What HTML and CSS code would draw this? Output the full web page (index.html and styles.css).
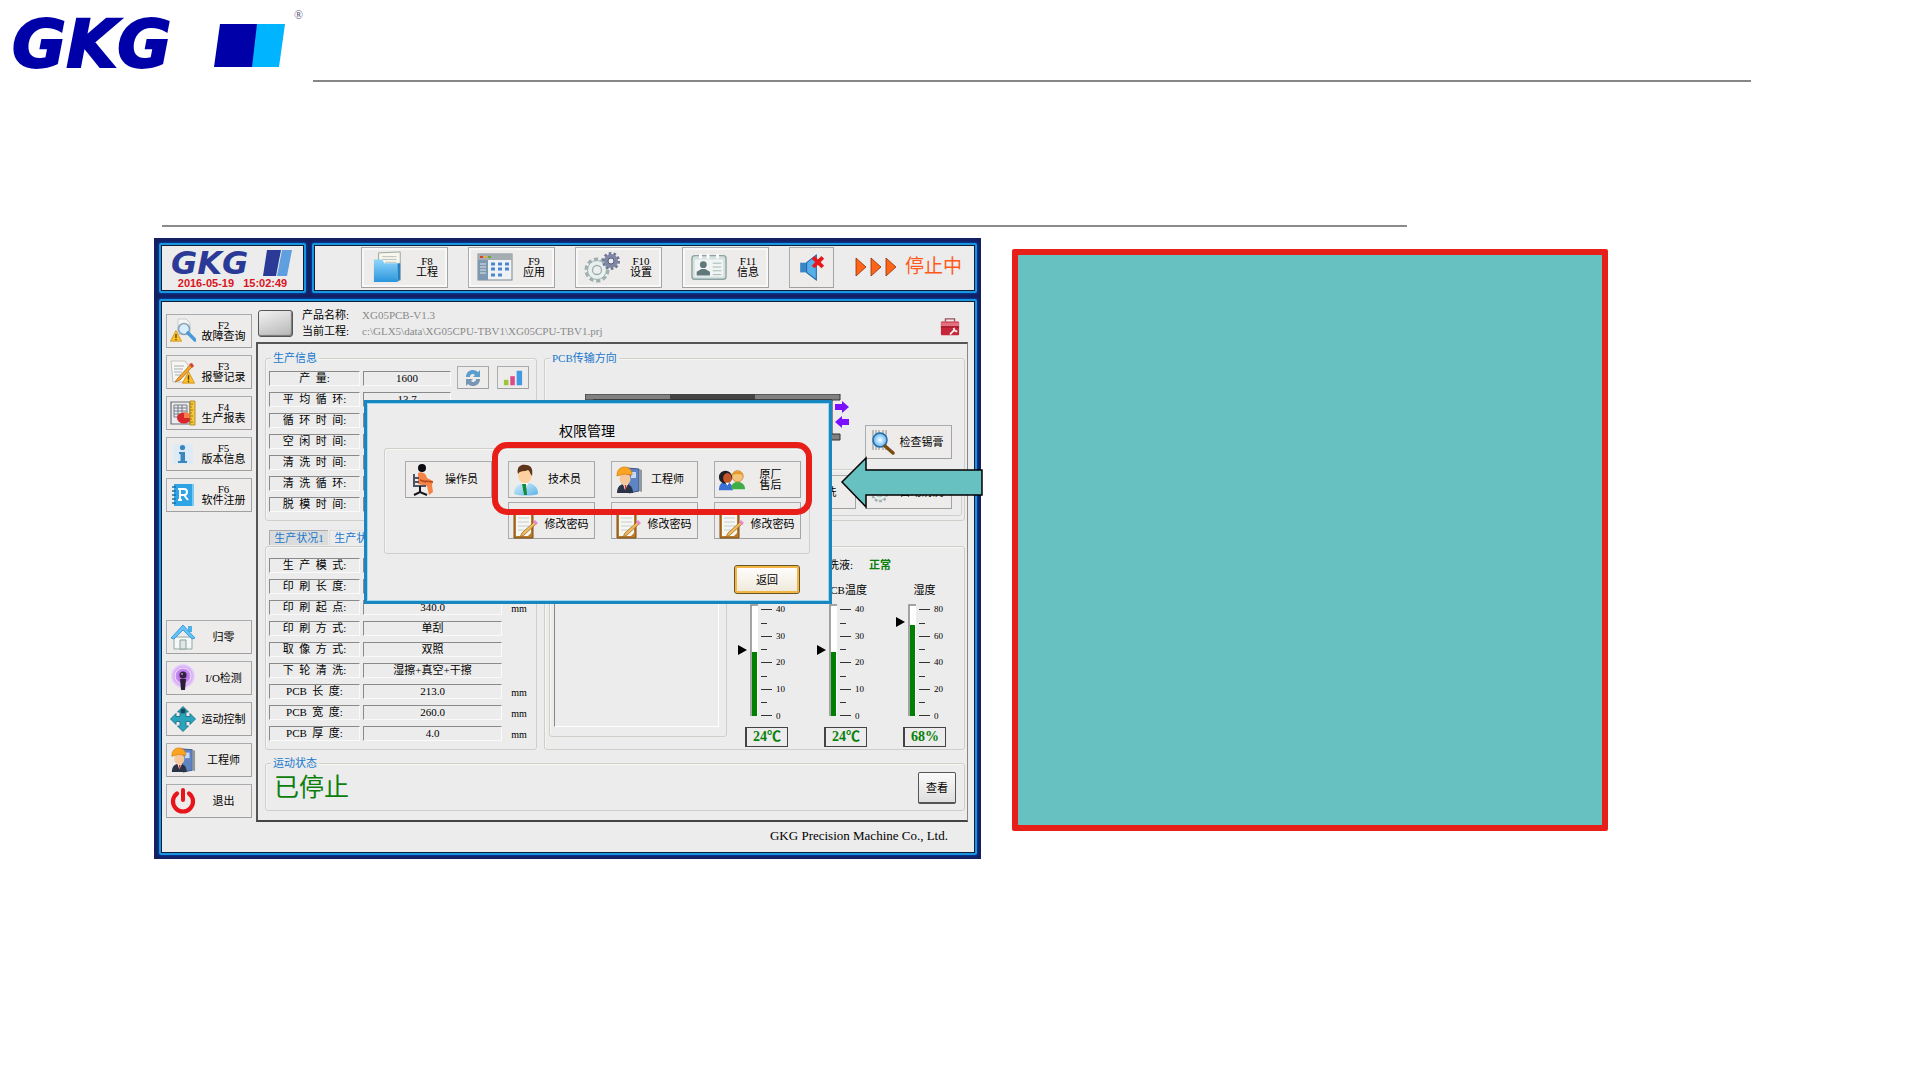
FILE: index.html
```html
<!DOCTYPE html>
<html lang="zh-CN">
<head>
<meta charset="utf-8">
<title>GKG 权限管理</title>
<link rel="stylesheet" href="styles.css">
</head>
<body>
<svg class="defs" aria-hidden="true">
  <defs>
    <linearGradient id="gBlue" x1="0" y1="0" x2="0" y2="1"><stop offset="0" stop-color="#8fd6fa"/><stop offset="1" stop-color="#2a95dd"/></linearGradient>
    <linearGradient id="gSuit" x1="0" y1="0" x2="1" y2="1"><stop offset="0" stop-color="#d9f1fc"/><stop offset="1" stop-color="#5ab4e8"/></linearGradient>
    <radialGradient id="gLens"><stop offset="0" stop-color="#fff"/><stop offset="1" stop-color="#58b4f5"/></radialGradient>
    <radialGradient id="gWave"><stop offset="0" stop-color="#a34fe0"/><stop offset=".55" stop-color="#c58bf0"/><stop offset="1" stop-color="#ecd9fb"/></radialGradient>
  </defs>
  <symbol id="warn" viewBox="0 0 12 12"><path d="M6 .5 11.6 11.2H.4Z" fill="#fbc02a" stroke="#c98a10" stroke-width=".7"/><path d="M6 4v4M6 9v1.3" stroke="#5a3b00" stroke-width="1.3"/></symbol>
  <symbol id="i-fault" viewBox="0 0 26 26"><path d="M8 1h8l4 4v11H8Z" fill="#f4f6f6" stroke="#c3cccc"/><circle cx="14" cy="11" r="5.5" fill="#d9eefc" stroke="#8aa3b5" stroke-width="1.6"/><path d="m18 15 7 7" stroke="#4a9bd8" stroke-width="3.6" stroke-linecap="round"/><use href="#warn" x="0" y="12" width="12" height="12"/></symbol>
  <symbol id="i-alarm" viewBox="0 0 26 26"><path d="M1 2h14l3 4v17H3Z" fill="#f6f6f3" stroke="#c4c4bd"/><path d="M4 7h10M4 10h9M4 13h8M5 16h6" stroke="#aab0b4"/><path d="M21 5 8 19l-3 4 5-2L23 7Z" fill="#f7a726" stroke="#b06a16" stroke-width=".8"/><path d="m19 5 3-1 2 3-2 2Z" fill="#d9432f"/><use href="#warn" x="12" y="12" width="13" height="13"/></symbol>
  <symbol id="i-report" viewBox="0 0 26 26"><path d="M1 2h19v22H1Z" fill="#e9ebee" stroke="#6c6f75" stroke-width="1.2"/><path d="M4 5h13v12H4ZM4 8h13M4 11h13M4 14h13M8 5v12M12 5v12" fill="none" stroke="#777b86"/><ellipse cx="14" cy="18" rx="7" ry="5.5" fill="#d8262b"/><path d="M14 18V12a7 5.5 0 0 1 7 6Z" fill="#ff7c4b"/><path d="M20 1h5v24h-5Z" fill="#f3c83a" stroke="#a98114" stroke-width=".8"/><path d="M20 4h3M20 7h2M20 10h3M20 13h2M20 16h3M20 19h2M20 22h3" stroke="#8a6a10" stroke-width=".8"/></symbol>
  <symbol id="i-info" viewBox="0 0 26 26"><rect x="3" y="3" width="20" height="20" rx="2" fill="#dcebf5"/><circle cx="12.500" cy="6.500" r="2.600" fill="#3b86bd"/><path d="M9 11h6v9h2v2H8v-2h2.500v-7H9Z" fill="#3b86bd"/></symbol>
  <symbol id="i-reg" viewBox="0 0 26 26"><rect x="4" y="2" width="20" height="22" fill="#2ea3e6"/><path d="M2 5h4M2 9h4M2 13h4M2 17h4M2 21h4" stroke="#1b6fa6" stroke-width="1.5"/><path d="M22 2h2v22h-2Z" fill="#7cc9f4"/><path d="M10 18V7h4a3 3 0 0 1 0 6h-4m4 0 4 5M8 7h3M8 18h4" fill="none" stroke="#fff" stroke-width="2"/></symbol>
  <symbol id="i-home" viewBox="0 0 26 26"><path d="M4 13h18v12H4Z" fill="#f4f8f6" stroke="#8fa9a4"/><path d="M10 16h6v9h-6Z" fill="#dfe8e6" stroke="#8c9f9b"/><path d="M18 2h4v6h-4Z" fill="#4fb1ea"/><path d="M1 14 13 1l12 13-3 1-9-9-9 9Z" fill="#64c2f6" stroke="#2a8fd3" stroke-width=".8"/></symbol>
  <symbol id="i-io" viewBox="0 0 26 26"><circle cx="13" cy="11" r="12" fill="url(#gWave)"/><circle cx="13" cy="11" r="8" fill="none" stroke="#f2e2ff" stroke-width="1"/><circle cx="13" cy="10" r="3.500" fill="#33213f"/><path d="M10 14h6l-1 11h-4Z" fill="#2a1e36"/><circle cx="12" cy="9" r="1" fill="#b28fd0"/></symbol>
  <symbol id="i-move" viewBox="0 0 26 26"><path d="M13 .5l5.500 5.500H16v4.500h4V7.500l5.500 5.500-5.500 5.500v-3h-4V20h2.500L13 25.500 7.500 20H10v-4.500H6v3L.5 13 6 7.500v3h4V6H7.500Z" fill="#2aa3bd" stroke="#1c7289" stroke-width=".9"/><circle cx="13" cy="5" r="2.500" fill="#154a5c"/></symbol>
  <symbol id="i-eng" viewBox="0 0 28 28"><path d="m12 2 12 1v22l-10 2Z" fill="#5f84c4" stroke="#3a5488"/><path d="m24 3 3 1v22l-3-1Z" fill="#90999f"/><path d="M16 6h5v6h-5Z" fill="#c5d8f4"/><path d="M2 27c0-6 3-9 8-9s8 3 8 9Z" fill="#2a3446"/><path d="m8 18 2 6 3-6Z" fill="#fff"/><path d="m9.500 19 1 6 1-6Z" fill="#d22"/><ellipse cx="10" cy="13" rx="5.500" ry="6" fill="#f6c79b"/><path d="M2 10C2 4 5 1 9.500 1S17 4 17 9l-8-1Z" fill="#fba41f" stroke="#d27a0b" stroke-width=".7"/></symbol>
  <symbol id="i-power" viewBox="0 0 26 26"><path d="M7 5.500a10 10 0 1 0 12 0" fill="none" stroke="#e8141c" stroke-width="4.200" stroke-linecap="round"/><path d="M13 2v10" stroke="#e8141c" stroke-width="4" stroke-linecap="round"/></symbol>
  <symbol id="i-folder" viewBox="0 0 32 34"><path d="M6 2 29 1v30H6Z" fill="#f7f7ee" stroke="#94a39a"/><path d="M10 6h15M10 9h15M13 12h12" stroke="#b6beb8"/><path d="M1 9h9l2 4h14v20H1Z" fill="url(#gBlue)"/><path d="M26 13h3v17l-3 3Z" fill="#2381c2"/></symbol>
  <symbol id="i-app" viewBox="0 0 36 28"><rect x="1" y="1" width="34" height="26" fill="#eef2f4" stroke="#7e868c"/><path d="M1 1h34v6H1Z" fill="#a5adb2"/><path d="M3 4h3" stroke="#d8412d" stroke-width="2"/><path d="M7 4h3" stroke="#e8b12c" stroke-width="2"/><path d="M11 4h3" stroke="#5fae3a" stroke-width="2"/><path d="M1 7h10v20H1Z" fill="#7d98b0"/><path d="M3 11h6M3 14h6M3 17h6M3 20h6" stroke="#dce7f0"/><path d="M14 11h4M21 11h4M28 11h4M14 16h4M21 16h4M28 16h4M14 22h4M21 22h4" stroke="#4b87cf" stroke-width="3"/></symbol>
  <symbol id="i-gears" viewBox="0 0 36 32"><circle cx="13" cy="19" r="10.500" fill="none" stroke="#9dafb0" stroke-width="4" stroke-dasharray="4 2.600"/><circle cx="13" cy="19" r="9.500" fill="#e8f0ee" stroke="#9dafb0"/><circle cx="13" cy="19" r="4.500" fill="#eee" stroke="#9dafb0" stroke-width="1.300"/><circle cx="27" cy="10" r="7.500" fill="none" stroke="#6e7596" stroke-width="3" stroke-dasharray="2.500 2.200"/><circle cx="27" cy="10" r="7" fill="#8087a5"/><circle cx="27" cy="10" r="3" fill="#eee" stroke="#555c7e"/></symbol>
  <symbol id="i-card" viewBox="0 0 38 28"><rect x="1" y="2" width="36" height="25" rx="3" fill="#d5e0e0" stroke="#8ea3a3" stroke-width="1.500"/><rect x="4" y="6" width="30" height="18" fill="#f0f5f4"/><path d="M10 0v5M18 0v5M28 0v5" stroke="#fff" stroke-width="3"/><circle cx="13" cy="11.500" r="3.600" fill="#60777c"/><path d="M6 23v-4l5-3h4l5 3v4Z" fill="#60777c"/><path d="M23 10h9M23 14h9M23 18h9M23 22h9" stroke="#a4b3b3"/></symbol>
  <symbol id="i-mute" viewBox="0 0 24 26"><path d="M1 9h6v9H1Z" fill="#3a86c6"/><path d="m7 9 9-7v23l-9-7Z" fill="#58b0ea" stroke="#1f66a6"/><path d="m13 4 9 9M22 4l-9 9" stroke="#e8161a" stroke-width="3.600"/></symbol>
  <symbol id="i-box" viewBox="0 0 22 20"><path d="M6 4V1h10v3" fill="none" stroke="#97505a" stroke-width="1.500"/><rect x="1" y="4" width="20" height="15" rx="1" fill="#c8273b"/><path d="M1 5h20v4H1Z" fill="#e1727f"/><path d="M1 10h20" stroke="#8c1626"/><path d="m11 18 5-5m-1-2 1 3 3 1" fill="none" stroke="#f3f3f3" stroke-width="2"/></symbol>
  <symbol id="i-refresh" viewBox="0 0 18 18"><path d="M2 8C2 1 10-1 14 3l2-2v7H9l2-2C9 4 6 5 6 8Z" fill="#5b9dcc"/><path d="M16 10c0 7-8 9-12 5l-2 2v-7h7l-2 2c2 2 5 1 5-2Z" fill="#7795b5"/></symbol>
  <symbol id="i-bars" viewBox="0 0 22 18"><path d="M1 11h5v6H1Z" fill="#9dc53b"/><path d="M8 7h5v10H8Z" fill="#dc4b86"/><path d="M15 1h6v16h-6Z" fill="#3f9be4"/></symbol>
  <symbol id="i-oper" viewBox="0 0 24 32"><circle cx="11" cy="4" r="4" fill="#0b0b12"/><path d="M7 9c4-2 8 0 9 5l6 3-1 4 1 7-4 3-2-9-9-2Z" fill="#f58345"/><path d="M3 10v12h12M3 14h5M3 18h5" fill="none" stroke="#4c5362" stroke-width="2"/><path d="m14 17 8 1M9 16l6 2" stroke="#b14a20" stroke-width="1.500"/><path d="M9 22v6m-6 3 6-3 7 3" fill="none" stroke="#15151c" stroke-width="2"/></symbol>
  <symbol id="i-tech" viewBox="0 0 26 32"><path d="M1 30c0-7 4-11 12-11s12 4 12 11c-6 2-18 2-24 0Z" fill="url(#gSuit)"/><path d="m9 19 2 12 4-12Z" fill="#fff"/><path d="m9 20 2 11h3l-1-11Z" fill="#128a3c"/><ellipse cx="12" cy="11" rx="7" ry="8.500" fill="#fcd0a0"/><path d="M5 10C3 2 9 0 13 1c6 0 7 5 6 11-2-2-2-5-4-6-3 2-8 0-10 4Z" fill="#5d351b"/></symbol>
  <symbol id="i-team" viewBox="0 0 30 24"><path d="M1 23c0-6 3-9 7-9s8 3 8 9Z" fill="#3a6fd8"/><path d="M14 22c0-5 3-8 7-8s8 3 8 8Z" fill="#3fae48"/><circle cx="21" cy="8" r="6" fill="#f5c27c" stroke="#c98a31"/><path d="M15 7c1-6 11-6 12 0-4-2-8-2-12 0Z" fill="#e39a27"/><circle cx="8" cy="9" r="7" fill="#1f2125"/><ellipse cx="10" cy="10" rx="4.500" ry="5.500" fill="#c4562a"/><path d="m8 15 2 3 2-3Z" fill="#fff"/></symbol>
  <symbol id="i-note" viewBox="0 0 26 30"><path d="M2 2h19v27H2Z" fill="#b97a2d" stroke="#7d4c14"/><path d="M4 3h15v21l-3 3H4Z" fill="#f7f7f1"/><path d="M6 9h11M6 13h11M6 17h11M6 21h8" stroke="#c6ccd2"/><path d="M8 1h7v4H8Z" fill="#c2c2c2"/><path d="m22 13 2 2-12 11-4 2 2-4Z" fill="#f4bc5e" stroke="#9a6a22" stroke-width=".8"/><path d="m21 13 2-2 3 3-2 2Z" fill="#e58ad0"/></symbol>
  <symbol id="i-search" viewBox="0 0 24 26"><path d="M2 1v20M5 1v20M8 1v20M12 1v20M15 1v20" stroke="#8a8a8a"/><circle cx="9" cy="11" r="7" fill="url(#gLens)" stroke="#2369a8" stroke-width="1.500"/><path d="m14 17 8 7" stroke="#7a4c14" stroke-width="3.500" stroke-linecap="round"/></symbol>
</svg>

<header class="brand">
  <div class="logo"><span class="wordmark">GKG</span>
    <svg class="flag" viewBox="0 0 71 43" aria-hidden="true"><path d="M6 0h38l-5 43H0Z" fill="#0000a8"/><path d="M43 0h28l-6 43H38Z" fill="#00b4ff"/></svg>
    <span class="reg">®</span></div>
  <hr class="rule">
</header>

<main>
  <hr class="subrule">
  <div class="stage">
    <section class="hmi">
      <div class="topbar">
        <div class="box clock">
          <div class="minilogo"><span>GKG</span><svg viewBox="0 0 29 26" aria-hidden="true"><path d="M4 0h14l-5 26H0Z" fill="#2b3a96"/><path d="M19 0h10l-5 26H14Z" fill="#5f9fe0"/></svg></div>
          <time datetime="2016-05-19T15:02:49">2016-05-19&nbsp;&nbsp; 15:02:49</time>
        </div>
        <nav class="box menu">
          <button class="btn top"><svg class="ic32"><use href="#i-folder"/></svg><span>F8<br>工程</span></button>
          <button class="btn top"><svg class="ic36"><use href="#i-app"/></svg><span>F9<br>应用</span></button>
          <button class="btn top"><svg class="ic36"><use href="#i-gears"/></svg><span>F10<br>设置</span></button>
          <button class="btn top"><svg class="ic36"><use href="#i-card"/></svg><span>F11<br>信息</span></button>
          <button class="btn mute" aria-label="静音"><svg class="ic26"><use href="#i-mute"/></svg></button>
          <div class="state"><svg viewBox="0 0 42 20" aria-hidden="true"><path d="m1 1 10 9-10 9ZM16 1l10 9-10 9ZM31 1l10 9-10 9Z" fill="#ff6418" stroke="#8a3208" stroke-width=".8"/></svg>停止中</div>
        </nav>
      </div>

      <div class="box body">
        <nav class="side">
          <button class="btn nav"><svg class="ic26"><use href="#i-fault"/></svg><span>F2<br>故障查询</span></button>
          <button class="btn nav"><svg class="ic26"><use href="#i-alarm"/></svg><span>F3<br>报警记录</span></button>
          <button class="btn nav"><svg class="ic26"><use href="#i-report"/></svg><span>F4<br>生产报表</span></button>
          <button class="btn nav"><svg class="ic26"><use href="#i-info"/></svg><span>F5<br>版本信息</span></button>
          <button class="btn nav"><svg class="ic26"><use href="#i-reg"/></svg><span>F6<br>软件注册</span></button>
          <button class="btn nav second"><svg class="ic26"><use href="#i-home"/></svg><span>归零</span></button>
          <button class="btn nav"><svg class="ic26"><use href="#i-io"/></svg><span>I/O检测</span></button>
          <button class="btn nav"><svg class="ic26"><use href="#i-move"/></svg><span>运动控制</span></button>
          <button class="btn nav"><svg class="ic26"><use href="#i-eng"/></svg><span>工程师</span></button>
          <button class="btn nav"><svg class="ic26"><use href="#i-power"/></svg><span>退出</span></button>
        </nav>

        <div class="content">
          <div class="project">
            <button class="lamp" aria-label="产品"></button>
            <dl>
              <dt>产品名称:</dt><dd>XG05PCB-V1.3</dd>
              <dt>当前工程:</dt><dd>c:\GLX5\data\XG05CPU-TBV1\XG05CPU-TBV1.prj</dd>
            </dl>
            <svg class="toolbox" aria-hidden="true"><use href="#i-box"/></svg>
          </div>

          <div class="work">
            <div class="left">
              <section class="group upper">
                <h2>生产信息</h2>
                <div class="info">
                  <dl class="rows short">
                    <dt>产  量:</dt><dd>1600</dd>
                    <dt>平  均  循  环:</dt><dd>13.7</dd>
                    <dt>循  环  时  间:</dt><dd></dd>
                    <dt>空  闲  时  间:</dt><dd></dd>
                    <dt>清  洗  时  间:</dt><dd></dd>
                    <dt>清  洗  循  环:</dt><dd></dd>
                    <dt>脱  模  时  间:</dt><dd></dd>
                  </dl>
                  <div class="aside">
                    <div class="tools">
                      <button class="btn tool" aria-label="刷新"><svg><use href="#i-refresh"/></svg></button>
                      <button class="btn tool" aria-label="图表"><svg><use href="#i-bars"/></svg></button>
                    </div>
                    <span class="unit">s</span>
                  </div>
                </div>
              </section>
              <div class="tabs"><button class="tab">生产状况1</button><button class="tab on">生产状况2</button></div>
              <section class="group lower">
                <dl class="rows long">
                  <dt>生  产  模  式:</dt><dd></dd><dd class="u"></dd>
                  <dt>印  刷  长  度:</dt><dd></dd><dd class="u"></dd>
                  <dt>印  刷  起  点:</dt><dd>340.0</dd><dd class="u">mm</dd>
                  <dt>印  刷  方  式:</dt><dd>单刮</dd><dd class="u"></dd>
                  <dt>取  像  方  式:</dt><dd>双照</dd><dd class="u"></dd>
                  <dt>下  轮  清  洗:</dt><dd>湿擦+真空+干擦</dd><dd class="u"></dd>
                  <dt>PCB  长  度:</dt><dd>213.0</dd><dd class="u">mm</dd>
                  <dt>PCB  宽  度:</dt><dd>260.0</dd><dd class="u">mm</dd>
                  <dt>PCB  厚  度:</dt><dd>4.0</dd><dd class="u">mm</dd>
                </dl>
              </section>
            </div>

            <div class="right">
              <section class="group upper">
                <h2>PCB传输方向</h2>
                <div class="transfer">
                  <svg class="conveyor" viewBox="0 0 265 48" aria-hidden="true"><path d="M0 0h255v6H0ZM0 40h255v6H0Z" fill="#808080" stroke="#333"/><path d="M85 0h85v6H85Z" fill="#444"/><path d="M8 6h239v34H8Z" fill="#eee" stroke="#222"/><path d="M250 10h7V7l7 6-7 6v-3h-7ZM264 31h-7v3l-7-6 7-6v3h7Z" fill="#7a10ff"/></svg>
                  <button class="btn act"><svg class="ic24"><use href="#i-search"/></svg><span>检查锡膏</span></button>
                </div>
                <div class="group clean">
                  <button class="btn act"><svg class="ic24"><use href="#i-search"/></svg><span>清洗</span></button>
                  <button class="btn act"><svg class="ic24"><use href="#i-gears"/></svg><span>自动清洗</span></button>
                </div>
              </section>
              <section class="group lower env">
                <div class="group list"><div class="well"></div></div>
                <div class="meters">
                  <p class="fluid"><span>清洗液:</span><b>正常</b></p>
                  <div class="meter"><span>温度</span>
                    <svg viewBox="-2 0 79 124"><use href="#scale"/><path d="M23 49h5v64h-5Z" fill="#008000"/><path d="m9 42 9 5-9 5Z"/><text x="47" y="9">40</text><text x="47" y="36">30</text><text x="47" y="62">20</text><text x="47" y="89">10</text><text x="47" y="116">0</text></svg>
                    <output>24℃</output></div>
                  <div class="meter"><span>PCB温度</span>
                    <svg viewBox="-2 0 79 124"><use href="#scale"/><path d="M23 49h5v64h-5Z" fill="#008000"/><path d="m9 42 9 5-9 5Z"/><text x="47" y="9">40</text><text x="47" y="36">30</text><text x="47" y="62">20</text><text x="47" y="89">10</text><text x="47" y="116">0</text></svg>
                    <output>24℃</output></div>
                  <div class="meter"><span>湿度</span>
                    <svg viewBox="-2 0 79 124"><g id="scale"><path d="M22 2h7v111h-7Z" fill="#fff"/><path d="M29 2h-7v111" fill="none" stroke="#888" stroke-width="1.500"/><path d="M32 6.500h11M32 33.500h11M32 59.500h11M32 86.500h11M32 112.500h11M32 20.500h6M32 46.500h6M32 73.500h6M32 99.500h6" stroke="#333"/></g><path d="M23 22h5v91h-5Z" fill="#008000"/><path d="m9 14 9 5-9 5Z"/><text x="47" y="9">80</text><text x="47" y="36">60</text><text x="47" y="62">40</text><text x="47" y="89">20</text><text x="47" y="116">0</text></svg>
                    <output>68%</output></div>
                </div>
              </section>
            </div>

            <section class="group motion">
              <h2>运动状态</h2>
              <div class="motion-row"><strong>已停止</strong><button class="look">查看</button></div>
            </section>
          </div>

          <footer>GKG Precision Machine Co., Ltd.</footer>
        </div>
      </div>

      <div class="dialog" role="dialog" aria-labelledby="dlg-title">
        <h1 id="dlg-title">权限管理</h1>
        <div class="group roles">
          <button class="btn role"><svg class="ic32"><use href="#i-oper"/></svg><span>操作员</span></button>
          <button class="btn role"><svg class="ic32"><use href="#i-tech"/></svg><span>技术员</span></button>
          <button class="btn role"><svg class="ic32"><use href="#i-eng"/></svg><span>工程师</span></button>
          <button class="btn role"><svg class="ic32"><use href="#i-team"/></svg><span>原厂<br>售后</span></button>
          <button class="btn role pass first-pass"><svg class="ic28"><use href="#i-note"/></svg><span>修改密码</span></button>
          <button class="btn role pass"><svg class="ic28"><use href="#i-note"/></svg><span>修改密码</span></button>
          <button class="btn role pass"><svg class="ic28"><use href="#i-note"/></svg><span>修改密码</span></button>
        </div>
        <button class="back">返回</button>
      </div>
      <div class="highlight"></div>
      <svg class="pointer" viewBox="0 0 144 54" aria-hidden="true"><path d="M2 26 26 2v12h116v25H26v12Z" fill="#68c1c1" stroke="#000" stroke-width="1.500"/></svg>
    </section>

    <aside class="note"></aside>
  </div>
</main>
</body>
</html>
```
FILE: styles.css
```css
* { box-sizing: border-box; }
body, h1, h2, p, dl, dd, hr { margin: 0; }
body {
  background: #fff;
  color: #000;
  font: 11px/14px "Liberation Serif", "Noto Sans CJK SC", serif;
}
button { font: inherit; color: inherit; padding: 0; margin: 0; }
svg { display: block; flex: none; }
.defs { position: absolute; width: 0; height: 0; }

/* slide header */
.brand { height: 82px; display: flex; align-items: flex-end; }
.logo { width: 313px; height: 82px; display: flex; align-items: flex-start; padding: 8px 0 0 12px; }
.wordmark { width: 202px; font: italic bold 66px/74px "DejaVu Sans", sans-serif; color: #0000a8; -webkit-text-stroke: 2px #0000a8; }
.flag { width: 71px; height: 43px; margin-top: 16px; }
.reg { margin-left: 9px; color: #557; font-size: 12px; }
.rule { flex: 1; height: 2px; margin-right: 169px; border: 0; background: #868686; }
.subrule { height: 2px; margin: 143px 513px 11px 162px; border: 0; background: #8a8a8a; }

.stage { display: grid; grid-template-columns: 827fr 596fr; gap: 31px; align-items: start; padding: 0 312px 0 154px; }
.note { height: 582px; margin-top: 11px; border: 6px solid #e81e18; border-radius: 2px; background: #68c1c1; }

/* machine window */
.hmi { position: relative; padding: 5px 4px 4px 5px; background: #14205f; }
.box { background: #ececec; border: 2px solid #1898dc; border-radius: 2px; box-shadow: inset 0 0 0 1px #101c3c, 0 0 2px 1px #0838a0; }
.topbar { display: grid; grid-template-columns: 147px 1fr; gap: 6px; height: 50px; }
.clock { display: flex; flex-direction: column; justify-content: space-between; padding: 5px 8px 2px; text-align: center; }
.minilogo { display: flex; justify-content: space-between; align-items: center; height: 26px; }
.minilogo span { padding-left: 2px; font: italic bold 32px/26px "DejaVu Sans", sans-serif; color: #2b3a96; }
.minilogo svg { width: 29px; height: 26px; margin-right: 4px; }
.clock time { display: block; font: bold 11px/11px "Liberation Sans", sans-serif; color: #d8141c; }
.menu { display: flex; align-items: center; padding: 0 13px 2px 47px; }
.btn { display: flex; align-items: center; background: #eeecea; border: 1px solid #aaadb0; border-right-color: #a4a4a4; border-bottom-color: #a0a0a0; }
.btn span { flex: 1; text-align: center; line-height: 11px; white-space: nowrap; }
.top { width: 87px; height: 41px; margin-right: 20px; padding: 0 4px 0 8px; background: #eeecea; box-shadow: inset 0 0 0 2px #f8f8f8; }
.top span { margin-left: 5px; font-size: 11px; }
.mute { width: 45px; height: 41px; justify-content: center; }
.state { display: flex; align-items: center; gap: 8px; margin-left: auto; color: #ff5a1c; font-size: 19px; line-height: 24px; }
.state svg { width: 42px; height: 20px; }
.ic24 { width: 24px; height: 26px; }
.ic26 { width: 26px; height: 28px; }
.ic28 { width: 26px; height: 30px; }
.ic32 { width: 28px; height: 32px; }
.ic36 { width: 36px; height: 34px; }
.top .ic32 { width: 36px; }

.body { display: grid; grid-template-columns: 94px 1fr; margin-top: 6px; padding: 1px; height: 556px; }
.side { display: flex; flex-direction: column; gap: 7px; padding: 12px 4px 0; }
.nav { height: 34px; padding: 0 0 0 3px; font-size: 11px; }
.second { margin-top: 101px; }
.content { display: flex; flex-direction: column; padding-right: 6px; }

.project { display: flex; align-items: flex-start; height: 40px; padding: 8px 8px 0 2px; }
.lamp { width: 35px; height: 27px; border: 1px solid #555; border-radius: 3px; background: linear-gradient(160deg, #f2f2f2, #b5b5b5); box-shadow: inset -1px -1px 1px #777; }
.project dl { flex: 1; display: grid; grid-template-columns: 60px 1fr; margin: -3px 0 0 9px; line-height: 16px; }
.project dl dd { color: #8a8a8a; }
.toolbox { width: 20px; height: 20px; margin-top: 7px; }

.work { display: grid; grid-template-columns: 272fr 421fr; column-gap: 7px; row-gap: 13px; height: 480px; align-content: start; padding: 14px 2px 0 7px; border-top: 2px solid #555; border-left: 2px solid #555; border-right: 1px solid #888; border-bottom: 2px solid #444; }
.left, .right { display: flex; flex-direction: column; }
.right { justify-content: space-between; }
.group { border: 1px solid #cfcfca; border-radius: 3px; box-shadow: inset 1px 1px 0 #f6f6f4; }
.group h2 { width: max-content; margin: -8px 0 0 5px; padding: 0 2px; background: #ececec; color: #1a78cc; font-size: 11px; font-weight: normal; line-height: 15px; }
.upper { height: 163px; }
.lower { height: 204px; }
.info { display: flex; padding-left: 3px; }
.rows { display: grid; gap: 6px 3px; white-space: pre; text-align: center; }
.rows dt, .rows dd { height: 15px; line-height: 13px; border: 1px solid #8a8a8a; border-right-color: #fafafa; border-bottom-color: #fafafa; }
.rows .u { border: 0; font-size: 10px; line-height: 17px; }
.short { grid-template-columns: 91px 88px; padding-top: 5px; }
.long { grid-template-columns: 91px 139px 1fr; padding: 11px 3px 0; }
.aside { padding-left: 6px; }
.tools { display: flex; gap: 8px; }
.tool { width: 32px; height: 23px; justify-content: center; }
.tool svg { width: 20px; height: 18px; }
.unit { display: block; margin: 5px 0 0 22px; }
.tabs { display: flex; gap: 1px; height: 25px; padding: 9px 4px 0; color: #1a78cc; }
.tab { width: 59px; height: 15px; border: 0; border-left: 1px solid #aaa; border-top: 1px solid #aaa; background: #dcdcdc; line-height: 13px; white-space: nowrap; }
.tab.on { background: #ececec; border-color: #ddd; }

.transfer { display: flex; justify-content: space-between; height: 103px; padding: 28px 12px 0 40px; }
.conveyor { width: 265px; height: 48px; }
.act { width: 87px; height: 34px; padding: 0 3px 0 5px; font-size: 11px; }
.transfer .act { margin-top: 31px; }
.clean { display: flex; justify-content: flex-end; gap: 9px; height: 47px; margin: 0 2px 0 4px; padding: 5px 9px; }
.env { display: grid; grid-template-columns: 183fr 237fr; }
.list { margin: 4px 0 12px 4px; padding: 4px 7px 9px 4px; }
.well { height: 100%; border: 1px solid #888; border-right-color: #fff; border-bottom-color: #fff; }
.meters { display: grid; grid-template-columns: repeat(3, 1fr); grid-template-rows: 25px 1fr; padding-top: 11px; }
.fluid { grid-column: 1 / 4; display: flex; gap: 16px; margin-left: 90px; }
.fluid b, .meter output { color: #0a800a; }
.meter { display: flex; flex-direction: column; align-items: center; }
.meter svg { width: 79px; height: 124px; margin-top: 6px; font-size: 9px; }
.meter output { width: 43px; height: 20px; border: 1px solid #444; border-left-width: 2px; font-size: 14px; font-weight: bold; line-height: 18px; text-align: center; }
.motion { grid-column: 1 / 3; height: 48px; }
.motion-row { display: flex; justify-content: space-between; padding: 0 8px; }
.motion strong { color: #0a800a; font-size: 25px; font-weight: normal; line-height: 34px; }
.look { width: 38px; height: 32px; margin-top: 1px; border: 1px solid #555; border-bottom-width: 2px; border-radius: 2px; background: linear-gradient(#fafafa, #dedede); }
.content footer { padding: 6px 20px 0 0; text-align: right; font-size: 13px; line-height: 16px; }

/* permission dialog */
.dialog { position: absolute; left: 210px; top: 162px; width: 468px; height: 204px; padding: 20px 17px; background: #ececec; border: 3px solid #1a86bf; box-shadow: inset 0 0 0 1px #9cd8f2; }
.dialog h1 { padding-right: 22px; font-size: 14px; font-weight: normal; line-height: 18px; text-align: center; }
.roles { display: grid; grid-template-columns: repeat(4, 87px); grid-auto-rows: 37px; gap: 4px 16px; height: 106px; margin: 7px 2px 0 0; padding: 12px 0 0 20px; }
.roles .btn span { font-size: 11px; }
.role { padding: 0 9px 0 3px; }
.role span { margin-left: 4px; }
.pass { padding: 7px 3px 0 3px; }
.first-pass { grid-column: 2; }
.back { display: block; width: 66px; height: 29px; margin: 11px 12px 0 auto; border: 1px solid #6b5520; border-radius: 3px; background: linear-gradient(#fff, #eee8d8); box-shadow: inset 0 0 0 2px #f3b544; }
.highlight { position: absolute; left: 338px; top: 204px; width: 320px; height: 73px; border: 6px solid #e81e18; border-radius: 15px; }
.pointer { position: absolute; left: 686px; top: 218px; width: 144px; height: 54px; }
```
